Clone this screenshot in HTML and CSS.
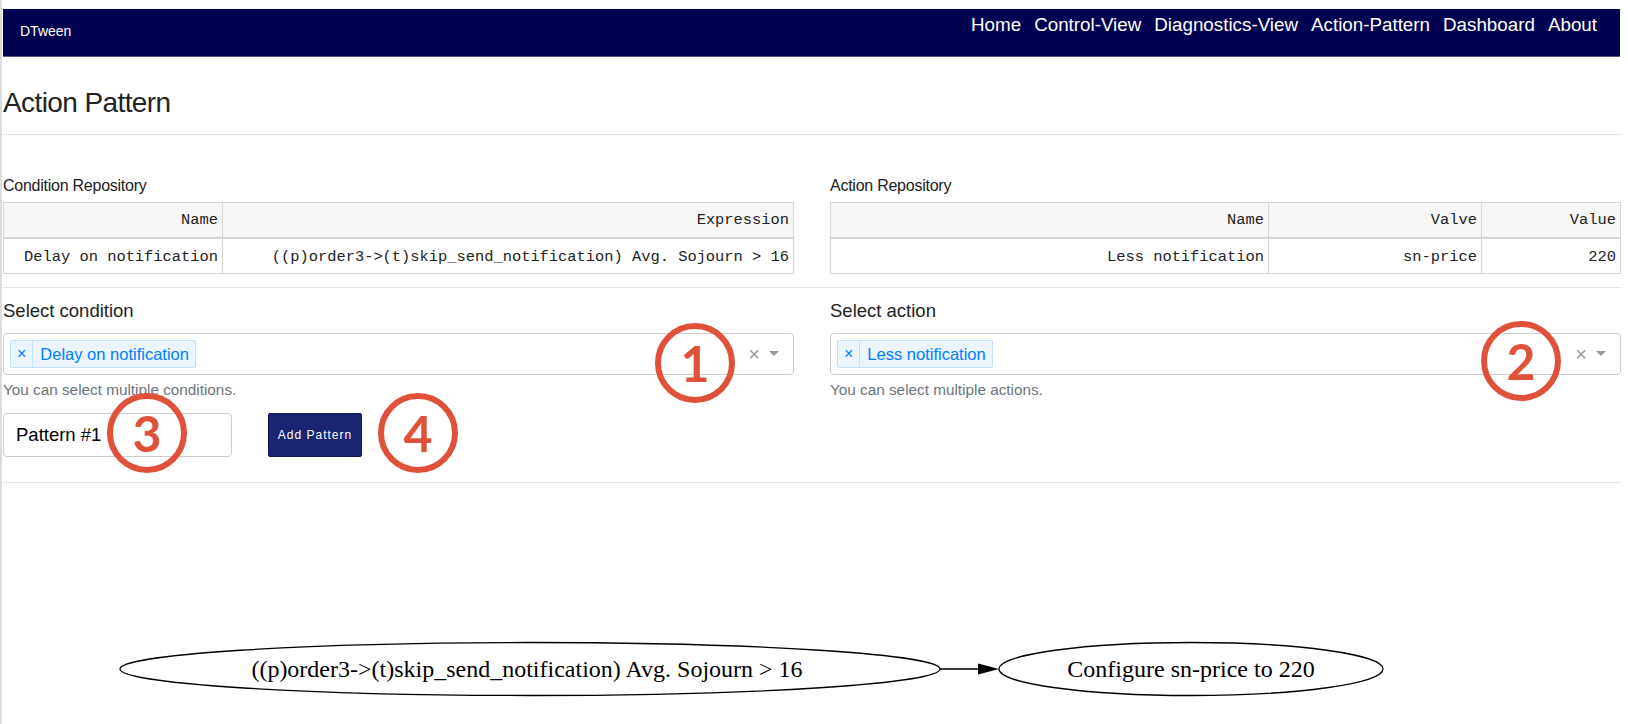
FILE: index.html
```html
<!DOCTYPE html>
<html>
<head>
<meta charset="utf-8">
<title>DTween - Action Pattern</title>
<link rel="stylesheet" href="styles.css">
</head>
<body>
<div class="page">
  <nav class="navbar">
    <span class="brand">DTween</span>
    <ul class="nav">
      <li>Home</li>
      <li>Control-View</li>
      <li>Diagnostics-View</li>
      <li>Action-Pattern</li>
      <li>Dashboard</li>
      <li>About</li>
    </ul>
  </nav>

  <h3 class="title">Action Pattern</h3>
  <hr class="rule">

  <div class="two-col repos">
    <section>
      <div class="repo-label">Condition Repository</div>
      <table class="grid-table">
        <thead>
          <tr><th class="c-name">Name</th><th>Expression</th></tr>
        </thead>
        <tbody>
          <tr><td>Delay on notification</td><td>((p)order3-&gt;(t)skip_send_notification) Avg. Sojourn &gt; 16</td></tr>
        </tbody>
      </table>
    </section>
    <section>
      <div class="repo-label">Action Repository</div>
      <table class="grid-table">
        <thead>
          <tr><th class="a-name">Name</th><th class="a-valve">Valve</th><th>Value</th></tr>
        </thead>
        <tbody>
          <tr><td>Less notification</td><td>sn-price</td><td>220</td></tr>
        </tbody>
      </table>
    </section>
  </div>

  <hr class="rule">

  <div class="two-col forms">
    <section>
      <label class="field-label">Select condition</label>
      <div class="select">
        <div class="tag"><span class="tag-x">×</span><span class="tag-label">Delay on notification</span></div>
        <div class="select-tools"><span class="clear">×</span><span class="caret"></span></div>
      </div>
      <div class="help">You can select multiple conditions.</div>
      <div class="pattern-row">
        <input class="pattern-input" type="text" value="Pattern #1">
        <button class="btn">Add Pattern</button>
      </div>
    </section>
    <section>
      <label class="field-label">Select action</label>
      <div class="select">
        <div class="tag"><span class="tag-x">×</span><span class="tag-label">Less notification</span></div>
        <div class="select-tools"><span class="clear">×</span><span class="caret"></span></div>
      </div>
      <div class="help">You can select multiple actions.</div>
    </section>
  </div>

  <hr class="rule">

  <svg class="graph" width="1618" height="241" viewBox="0 0 1618 241">
    <ellipse cx="527" cy="186" rx="410" ry="26.5" fill="none" stroke="#000" stroke-width="1.3"/>
    <text x="524" y="194" text-anchor="middle" class="graph-text">((p)order3-&gt;(t)skip_send_notification) Avg. Sojourn &gt; 16</text>
    <line x1="937" y1="186" x2="977" y2="186" stroke="#000" stroke-width="1.3"/>
    <polygon points="975,180.5 996,186 975,191.5" fill="#000"/>
    <ellipse cx="1188" cy="186" rx="192" ry="26.5" fill="none" stroke="#000" stroke-width="1.3"/>
    <text x="1188" y="194" text-anchor="middle" class="graph-text">Configure sn-price to 220</text>
  </svg>
</div>

<div class="badge b1">1</div>
<div class="badge b2">2</div>
<div class="badge b3">3</div>
<div class="badge b4">4</div>
</body>
</html>
```

FILE: styles.css
```css
html, body {
  margin: 0;
  padding: 0;
  background: #fff;
}

body {
  font-family: "Liberation Sans", Arial, Helvetica, sans-serif;
  color: #212529;
}

.page {
  border-left: 2px solid #dcdcdc;
  padding: 9px 7px 0 1px;
  min-height: 724px;
  box-sizing: border-box;
}

/* ---------- navbar ---------- */
.navbar {
  height: 47px;
  background: #000050;
  border-bottom: 1px solid #56568a;
  display: flex;
  justify-content: space-between;
  align-items: flex-start;
  margin-right: 1px;
}

.brand {
  color: #fff;
  font-size: 14px;
  line-height: 16px;
  margin: 14px 0 0 17px;
}

.nav {
  list-style: none;
  margin: 5px 23px 0 0;
  padding: 0;
  display: flex;
  gap: 13px;
}

.nav li {
  color: #fff;
  font-size: 18.8px;
  line-height: 21px;
}

/* ---------- headings & rules ---------- */
.title {
  font-size: 28px;
  font-weight: 400;
  letter-spacing: -0.6px;
  line-height: 34px;
  margin: 29px 0 14px 0;
  color: #222;
}

.rule {
  border: 0;
  border-top: 1px solid #e3e3e3;
  margin: 0;
  height: 0;
}

.two-col {
  display: grid;
  grid-template-columns: 1fr 1fr;
  column-gap: 36px;
}

/* ---------- repositories ---------- */
.repos {
  padding: 41px 0 13px 0;
}

.repo-label {
  font-size: 16px;
  letter-spacing: -0.25px;
  line-height: 19px;
  margin-bottom: 7px;
  color: #222;
}

.grid-table {
  width: 100%;
  border-collapse: collapse;
  border: 1px solid #d6d6d6;
  font-family: "Liberation Mono", "Courier New", monospace;
  font-size: 15.4px;
  color: #222;
}

.grid-table th,
.grid-table td {
  border: 1px solid #d6d6d6;
  text-align: right;
  font-weight: 400;
  padding: 0 4px;
  height: 34px;
  white-space: nowrap;
}

.grid-table th {
  background: #f7f7f7;
  border-bottom: 2px solid #d6d6d6;
}

.grid-table td {
  height: 32px;
  padding-top: 2px;
}

.c-name { width: 210px; }
.a-name { width: 429px; }
.a-valve { width: 204px; }

/* ---------- selects ---------- */
.forms {
  padding: 12px 0 25px 0;
}

.field-label {
  display: block;
  font-size: 18.5px;
  line-height: 22px;
  margin-bottom: 11px;
  color: #222;
}

.select {
  height: 42px;
  box-sizing: border-box;
  border: 1px solid #cccccc;
  border-radius: 4px;
  display: flex;
  align-items: center;
  justify-content: space-between;
  padding: 0 14px 0 6px;
}

.tag {
  display: flex;
  height: 28px;
  box-sizing: border-box;
  border: 1px solid #c2e0ff;
  border-radius: 2px;
  background: #ebf5ff;
  color: #007eff;
  align-items: stretch;
}

.tag-x {
  display: flex;
  align-items: center;
  padding: 0 6px 1px 6px;
  border-right: 1px solid #c2e0ff;
  font-size: 16px;
}

.tag-label {
  display: flex;
  align-items: center;
  padding: 0 6px 0 7px;
  font-size: 16.5px;
}

.select-tools {
  display: flex;
  align-items: center;
  gap: 9px;
}

.clear {
  color: #999;
  font-size: 20px;
  line-height: 20px;
}

.caret {
  width: 0;
  height: 0;
  border-top: 5px solid #999;
  border-left: 5px solid transparent;
  border-right: 5px solid transparent;
  margin-top: -2px;
}

.help {
  font-size: 15.3px;
  line-height: 17px;
  color: #6c757d;
  margin-top: 6px;
}

.pattern-row {
  display: flex;
  gap: 36px;
  margin-top: 15px;
}

.pattern-input {
  width: 229px;
  height: 44px;
  box-sizing: border-box;
  border: 1px solid #cccccc;
  border-radius: 4px;
  padding: 0 12px;
  font-family: "Liberation Sans", Arial, sans-serif;
  font-size: 18.5px;
  color: #000;
  outline: none;
}

.btn {
  width: 94px;
  height: 44px;
  box-sizing: border-box;
  background: #1b2473;
  border: 1px solid #11185a;
  border-radius: 2px;
  color: #fff;
  font-family: "Liberation Sans", Arial, sans-serif;
  font-size: 12px;
  letter-spacing: 1px;
  padding: 0;
}

/* ---------- graph ---------- */
.graph {
  display: block;
}

.graph-text {
  font-family: "Liberation Serif", "Times New Roman", serif;
  font-size: 24px;
  fill: #000;
}

/* ---------- annotation badges ---------- */
.badge {
  position: absolute;
  width: 80px;
  height: 80px;
  box-sizing: border-box;
  border: 6px solid #e0513a;
  border-radius: 50%;
  color: #e0513a;
  font-family: Lato, "Open Sans", sans-serif;
  font-weight: 700;
  font-size: 50px;
  line-height: 1;
  display: flex;
  align-items: center;
  justify-content: center;
}

.b1 { left: 655px; top: 323px; }
.b2 { left: 1481px; top: 321px; }
.b3 { left: 107px; top: 393px; }
.b4 { left: 378px; top: 393px; }
```
